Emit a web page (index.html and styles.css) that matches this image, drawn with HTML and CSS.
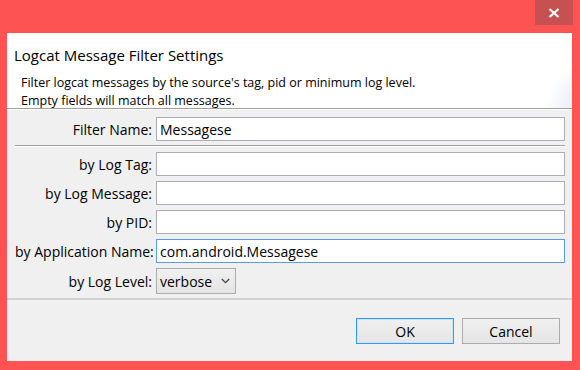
FILE: index.html
```html
<!DOCTYPE html>
<html lang="en">
<head>
  <meta charset="UTF-8" />
  <title>Logcat Message Filter Settings</title>
  <link rel="stylesheet" href="styles.css">
</head>
<body>
  <div class="window">
    <div class="titlebar">
      <button class="close-btn" title="Close">
        <svg width="12" height="10" viewBox="0 0 12 10">
          <path d="M1.5 1 L10.5 9 M10.5 1 L1.5 9" stroke="#fff" stroke-width="2.2" fill="none" />
        </svg>
      </button>
    </div>

    <div class="client">
      <header class="banner">
        <h1>Logcat Message Filter Settings</h1>
        <p>Filter logcat messages by the source's tag, pid or minimum log level.<br>
        Empty fields will match all messages.</p>
      </header>

      <main class="form">
        <div class="row">
          <label>Filter Name:</label>
          <input type="text" class="field" value="Messagese" />
        </div>
        <div class="separator"></div>
        <div class="row">
          <label>by Log Tag:</label>
          <input type="text" class="field" />
        </div>
        <div class="row">
          <label>by Log Message:</label>
          <input type="text" class="field" />
        </div>
        <div class="row">
          <label>by PID:</label>
          <input type="text" class="field" />
        </div>
        <div class="row">
          <label>by Application Name:</label>
          <input type="text" class="field focused" value="com.android.Messagese" />
        </div>
        <div class="row">
          <label>by Log Level:</label>
          <div class="combo">
            <span>verbose</span>
            <svg width="9" height="6" viewBox="0 0 9 6">
              <path d="M0.8 1 L4.5 4.7 L8.2 1" stroke="#444" stroke-width="1.3" fill="none" />
            </svg>
          </div>
        </div>
      </main>

      <footer class="buttons">
        <button class="btn default">OK</button>
        <button class="btn">Cancel</button>
      </footer>
    </div>
  </div>
</body>
</html>
```

FILE: styles.css
```css
body {
  margin: 0;
  background-color: #fd5353;
  font-family: 'Open Sans', 'Noto Sans', sans-serif;
  color: #000;
}

.window {
  width: 580px;
  height: 370px;
  display: flex;
  flex-direction: column;
}

.titlebar {
  height: 33px;
  display: flex;
  justify-content: flex-end;
  align-items: flex-start;
  padding-right: 7px;
}

.close-btn {
  width: 38px;
  height: 25px;
  border: none;
  background-color: #c75050;
  display: flex;
  justify-content: center;
  align-items: center;
  padding: 0;
  padding-top: 1px;
}

.client {
  margin-left: 7px;
  width: 565px;
  height: 328px;
  background-color: #f0f0f0;
  display: flex;
  flex-direction: column;
}

.banner {
  height: 76px;
  box-sizing: border-box;
  padding: 13px 0 0 7px;
  background-color: #fff;
  background-image:
    radial-gradient(ellipse 120px 90px at 110% 105%, #d9e1f2 0%, #e7ecf7 45%, rgba(255, 255, 255, 0) 70%),
    radial-gradient(ellipse 110px 120px at 125% 60%, rgba(230, 236, 248, 0.9) 0%, rgba(240, 243, 250, 0.8) 55%, rgba(255, 255, 255, 0) 72%);
  border-bottom: 1px solid #a0a0a0;
  box-shadow: 0 1px 0 #fff;
}

h1 {
  font-size: 15px;
  font-weight: normal;
  line-height: 18px;
  margin: 0 0 10px 0;
  color: #000;
}

.banner p {
  font-size: 12.5px;
  line-height: 18px;
  margin: 0 0 0 7px;
}

.form {
  padding: 8px 7px 4px 8px;
  display: flex;
  flex-direction: column;
  gap: 5px;
}

.row {
  display: flex;
  align-items: center;
  gap: 4px;
}

.row label {
  width: 137px;
  text-align: right;
  font-size: 14px;
  white-space: nowrap;
}

.field {
  flex: 1;
  height: 24px;
  box-sizing: border-box;
  border: 1px solid #abadb3;
  padding: 0 3px;
  margin: 0;
  font-family: inherit;
  font-size: 14px;
  color: #000;
  background-color: #fff;
  outline: none;
}

.field.focused {
  border-color: #569de5;
}

.separator {
  margin: -1px 0 0 0;
  border-top: 1px solid #a0a0a0;
  border-bottom: 1px solid #fff;
  height: 0;
}

.combo {
  width: 80px;
  height: 26px;
  box-sizing: border-box;
  border: 1px solid #acacac;
  background: linear-gradient(#f0f0f0, #e5e5e5);
  display: flex;
  align-items: center;
  justify-content: space-between;
  padding: 0 5px 0 3px;
  font-size: 14px;
}

.buttons {
  border-top: 2px solid #d3d3d3;
  padding: 18px 12px 0 0;
  display: flex;
  justify-content: flex-end;
  gap: 8px;
}

.btn {
  width: 98px;
  height: 26px;
  border: 1px solid #acacac;
  background: linear-gradient(#f0f0f0, #e5e5e5);
  font-family: inherit;
  font-size: 14px;
  color: #000;
  padding: 0;
}

.btn.default {
  border-color: #3399ff;
  box-shadow: inset 0 0 0 1px #cce4f7;
}
```
